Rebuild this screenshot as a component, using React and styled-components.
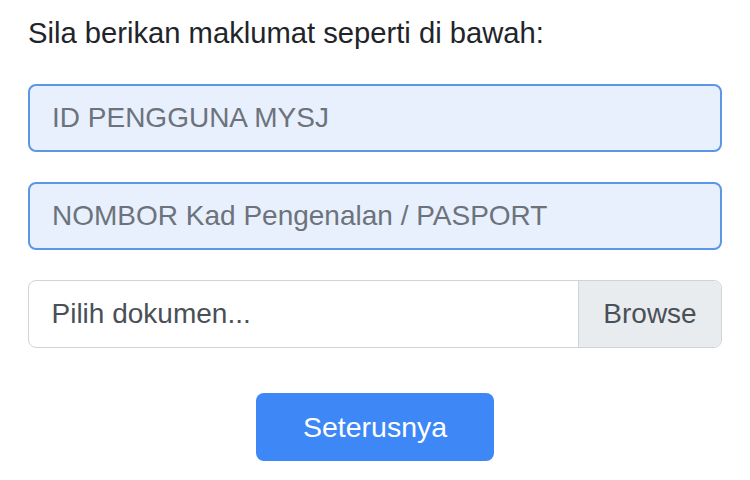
import styled, { createGlobalStyle } from "styled-components";

const GlobalStyle = createGlobalStyle`
  html, body {
    margin: 0;
    padding: 0;
    background: #ffffff;
  }
  body {
    font-family: "Liberation Sans", Arial, sans-serif;
  }
`;

const Page = styled.div`
  display: flex;
  flex-direction: column;
  padding: 16px 28px 0;
`;

const Intro = styled.p`
  margin: 0 0 33px;
  font-size: 29.2px;
  line-height: 35px;
  color: #212529;
`;

const Fields = styled.div`
  display: flex;
  flex-direction: column;
  gap: 30px;
`;

const TextField = styled.input`
  box-sizing: border-box;
  width: 100%;
  height: 68px;
  padding: 0 22px;
  border: 2px solid #5c97e6;
  border-radius: 8px;
  background: #e8f0fe;
  font-family: inherit;
  font-size: 28px;
  color: #495057;
  outline: none;

  &::placeholder {
    color: #6c737b;
  }
`;

const FilePicker = styled.label`
  box-sizing: border-box;
  display: flex;
  height: 68px;
  border: 1.5px solid #cfd4d9;
  border-radius: 8px;
  overflow: hidden;
  background: #ffffff;
  font-size: 28px;
  color: #495057;
`;

const FileName = styled.span`
  flex: 1;
  display: flex;
  align-items: center;
  padding-left: 22.5px;
`;

const BrowseTag = styled.span`
  display: flex;
  align-items: center;
  justify-content: center;
  width: 142px;
  background: #e9ecef;
  border-left: 1.5px solid #cfd4d9;
`;

const Actions = styled.div`
  display: flex;
  justify-content: center;
  margin-top: 45px;
`;

const NextButton = styled.button`
  width: 238px;
  height: 68px;
  border: none;
  border-radius: 8px;
  background: #3d87f6;
  color: #ffffff;
  font-family: inherit;
  font-size: 28.5px;
  cursor: pointer;
`;

export default function App() {
  return (
    <>
      <GlobalStyle />
      <Page>
        <Intro>Sila berikan maklumat seperti di bawah:</Intro>
        <Fields>
          <TextField placeholder="ID PENGGUNA MYSJ" />
          <TextField placeholder="NOMBOR Kad Pengenalan / PASPORT" />
          <FilePicker>
            <FileName>Pilih dokumen...</FileName>
            <BrowseTag>Browse</BrowseTag>
          </FilePicker>
        </Fields>
        <Actions>
          <NextButton>Seterusnya</NextButton>
        </Actions>
      </Page>
    </>
  );
}
